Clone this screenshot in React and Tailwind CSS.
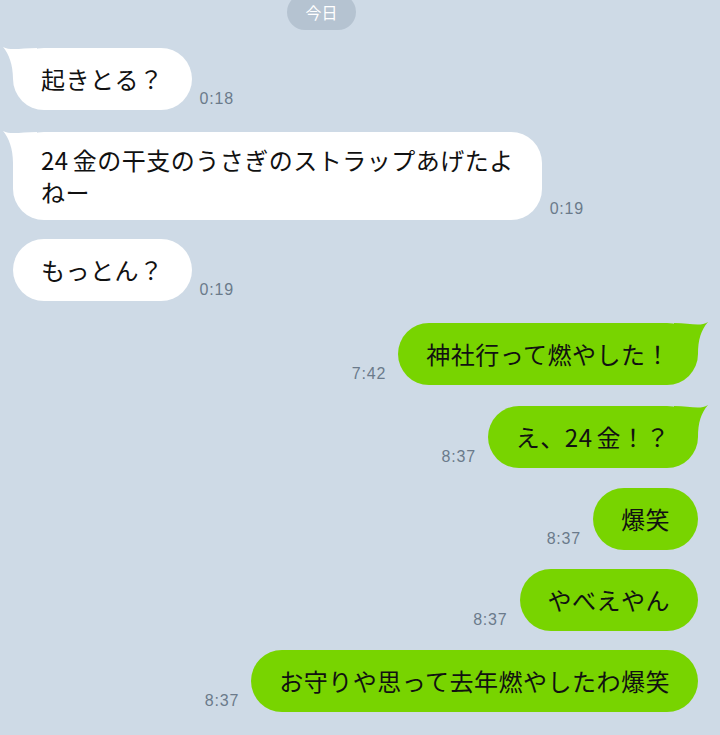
import React from "react";

const jp = { fontFamily: '"Noto Sans CJK JP", "Noto Sans", sans-serif' };
const num = { fontFamily: '"Liberation Sans", Arial, sans-serif' };

const messages = [
  { side: "left", text: [["起きとる？"]], time: "0:18", tail: true, mt: "mt-[18px]" },
  { side: "left", text: [["24", "金の干支のうさぎのストラップあげたよ"], ["ねー"]], time: "0:19", tail: true, mt: "mt-[22px]" },
  { side: "left", text: [["もっとん？"]], time: "0:19", tail: false, mt: "mt-[19px]" },
  { side: "right", text: [["神社行って燃やした！"]], time: "7:42", tail: true, mt: "mt-[22px]" },
  { side: "right", text: [["え、", "24", "金！？"]], time: "8:37", tail: true, mt: "mt-[21px]" },
  { side: "right", text: [["爆笑"]], time: "8:37", tail: false, mt: "mt-[20px]" },
  { side: "right", text: [["やべえやん"]], time: "8:37", tail: false, mt: "mt-[19px]" },
  { side: "right", text: [["お守りや思って去年燃やしたわ爆笑"]], time: "8:37", tail: false, mt: "mt-[19px]" },
];

function LeftTail() {
  return (
    <svg className="absolute -left-[10px] -top-[1px]" width="34" height="32" viewBox="0 0 34 32">
      <path d="M0 0 C8 4 18 1 34 1 L34 32 L10 32 C10 18 6 7 0 0 Z" fill="#ffffff" />
    </svg>
  );
}

function RightTail() {
  return (
    <svg className="absolute -right-[10px] -top-[1px]" width="34" height="32" viewBox="0 0 34 32">
      <path d="M34 0 C26 5 16 1 0 1 L0 32 L24 32 C24 18 27 8 34 0 Z" fill="#78d400" />
    </svg>
  );
}

function Time({ value, side }) {
  return (
    <span
      style={num}
      className={`text-[16px] tracking-[0.8px] leading-none text-[#6b7a8b] mb-[3px] ${side === "left" ? "ml-[8px]" : "mr-[12px]"}`}
    >
      {value}
    </span>
  );
}

function Bubble({ m }) {
  const multi = m.text.length > 1;
  const left = m.side === "left";
  return (
    <div
      style={jp}
      className={`relative rounded-[31px] px-7 text-[24px] tracking-[0.5px] text-[#111111] whitespace-nowrap ${
        left ? "bg-white" : "bg-[#78d400]"
      } ${multi ? "py-3 leading-[32px]" : "py-4 leading-[30px]"}`}
    >
      {m.tail && (left ? <LeftTail /> : <RightTail />)}
      {m.text.map((line, i) => (
        <div key={i} className="relative">
          {line.map((part, j) =>
            part === "24" ? (
              <span key={j} className="mr-[4px]">{part}</span>
            ) : (
              <span key={j}>{part}</span>
            )
          )}
        </div>
      ))}
    </div>
  );
}

export default function App() {
  return (
    <div className="w-[720px] h-[735px] overflow-hidden bg-[#cedae6]">
      <div className="flex">
        <div
          style={jp}
          className="-mt-[6px] ml-[287px] h-[36px] w-[69px] rounded-full bg-[#b5c3d1] text-white text-[16px] flex items-center justify-center"
        >
          今日
        </div>
      </div>
      <div className="flex flex-col pl-[13px] pr-[22px]">
        {messages.map((m, i) => (
          <div
            key={i}
            className={`flex items-end ${m.mt} ${m.side === "left" ? "justify-start" : "justify-end"}`}
          >
            {m.side === "left" ? (
              <>
                <Bubble m={m} />
                <Time value={m.time} side="left" />
              </>
            ) : (
              <>
                <Time value={m.time} side="right" />
                <Bubble m={m} />
              </>
            )}
          </div>
        ))}
      </div>
    </div>
  );
}
